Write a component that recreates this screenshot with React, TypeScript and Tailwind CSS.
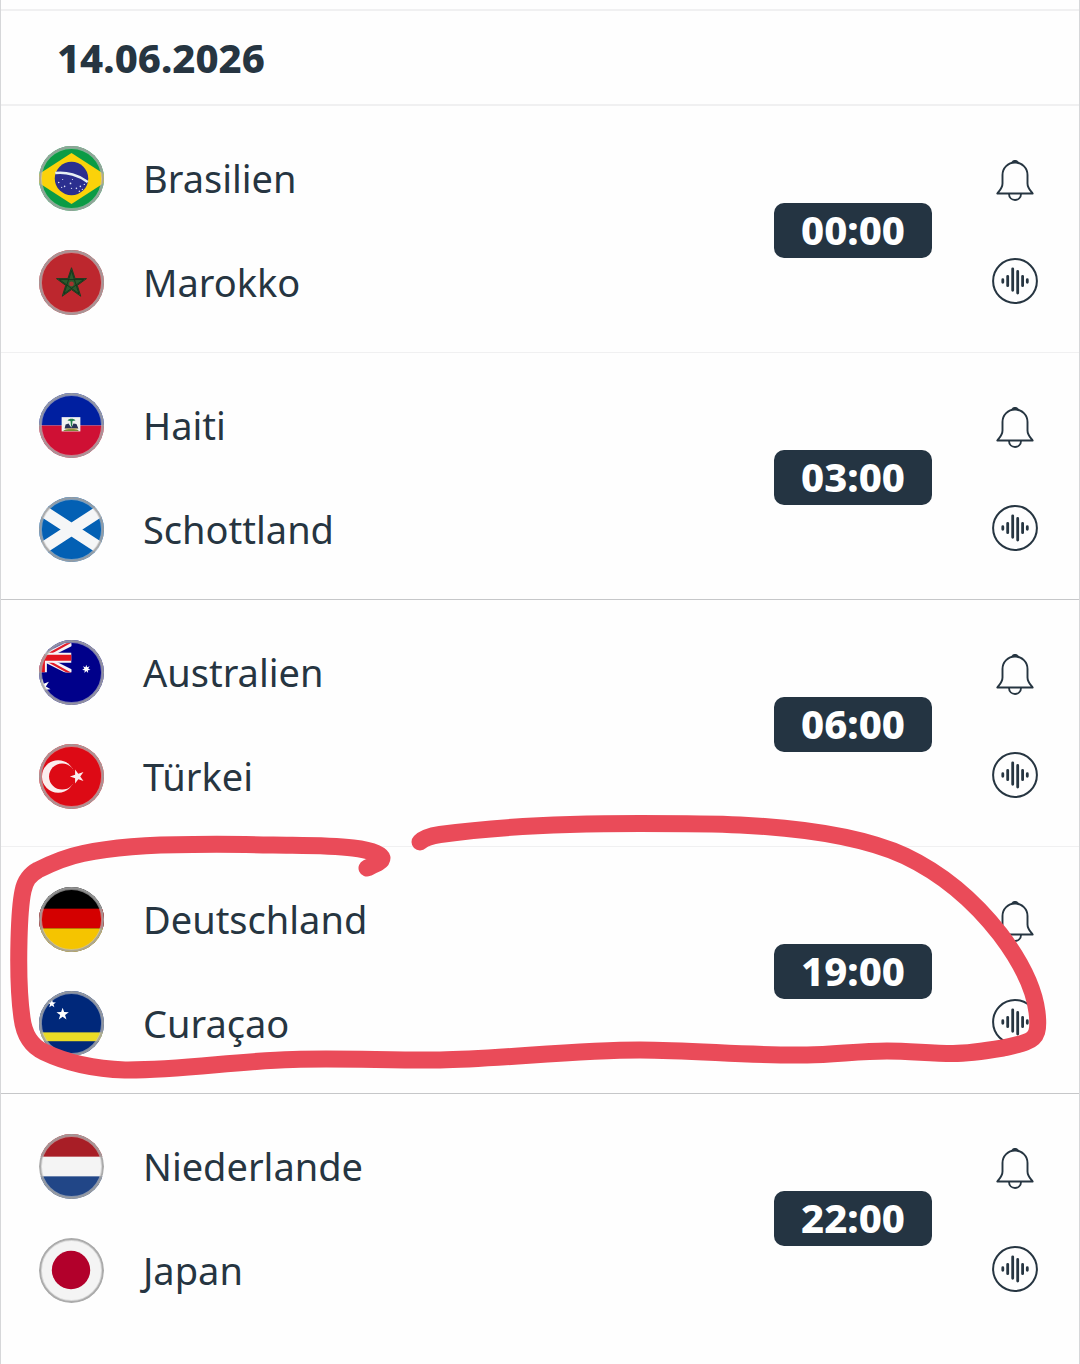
import React from 'react';

interface Team {
  name: string;
  flag: React.ReactNode;
}

interface Match {
  time: string;
  home: Team;
  away: Team;
  marked?: boolean;
}

// Points string of a regular star, first tip at `turn` degrees
const star = (cx: number, cy: number, outer: number, inner: number, tips = 5, turn = -90) => {
  const points: string[] = [];
  for (let i = 0; i < tips * 2; i++) {
    const r = i % 2 === 0 ? outer : inner;
    const a = ((turn + (i * 180) / tips) * Math.PI) / 180;
    points.push(`${(cx + r * Math.cos(a)).toFixed(2)},${(cy + r * Math.sin(a)).toFixed(2)}`);
  }
  return points.join(' ');
};

const brazil = (
  <>
    <rect width="66" height="66" fill="#0b9b45" />
    <path d="M33 7L73 33L33 59L-7 33Z" fill="#fbd20a" />
    <circle cx="33" cy="33" r="17" fill="#2b2f8f" />
    <path d="M16.5 27.5C28 26 41 30 49.5 36.5" fill="none" stroke="#e6f0f4" strokeWidth="2.6" />
    <g fill="#dfe3f5">
      <circle cx="20" cy="37" r="0.8" />
      <circle cx="24" cy="34" r="0.6" />
      <circle cx="26" cy="41" r="0.8" />
      <circle cx="23" cy="42" r="0.7" />
      <circle cx="32" cy="38" r="0.9" />
      <circle cx="34" cy="34" r="0.6" />
      <circle cx="33" cy="43" r="0.7" />
      <circle cx="38" cy="43" r="0.8" />
      <circle cx="41" cy="46" r="0.8" />
      <circle cx="42" cy="41" r="0.8" />
      <circle cx="44" cy="44" r="0.7" />
      <circle cx="46" cy="39" r="0.7" />
    </g>
  </>
);

const morocco = (
  <>
    <rect width="66" height="66" fill="#bd272e" />
    <polygon points={star(33, 34, 16, 6.2)} fill="#2c5a2d" stroke="#1f3a20" strokeWidth="1" />
    <path
      d="M33 21L40.6 44.5L20.6 30H45.4L25.4 44.5Z"
      fill="none"
      stroke="#16331b"
      strokeWidth="0.9"
    />
    <circle cx="33" cy="34.5" r="2.4" fill="#a5342f" />
  </>
);

const haiti = (
  <>
    <rect width="66" height="33" fill="#001fa0" />
    <rect y="33" width="66" height="33" fill="#cf1034" />
    <rect x="23" y="24.5" width="19" height="14.5" fill="#f1f2f1" />
    <path d="M24.5 38.5C27 36 39 36 40.5 38.5Z" fill="#7a8a3a" />
    <path d="M26 36L27 32L30 31L32 34L33 35L35 31L38 31.5L40 36Z" fill="#2a3357" />
    <path d="M29 28C30 25.5 36 25.5 37 28L34 28.5L33.5 34H32.5L32 28.5Z" fill="#1f7d4a" />
    <path d="M27 36.5H39" stroke="#c4a33b" strokeWidth="0.9" />
  </>
);

const scotland = (
  <>
    <rect width="66" height="66" fill="#0360b4" />
    <path d="M-17 0.5L83 65.5M-17 65.5L83 0.5" stroke="#f5f6f7" strokeWidth="12" />
  </>
);

const australia = (
  <>
    <rect width="66" height="66" fill="#00008a" />
    <svg x="-27" y="3" width="60" height="30" viewBox="0 0 60 30">
      <path d="M0 0L60 30M60 0L0 30" stroke="#f6f3f6" strokeWidth="6" />
      <path d="M30 15L60 31.5M30 15L60 -1.5" stroke="#e01c2a" strokeWidth="2.2" />
      <path d="M30 0V30M0 15H60" stroke="#f6f3f6" strokeWidth="10" />
      <path d="M30 0V30M0 15H60" stroke="#e3141f" strokeWidth="6" />
    </svg>
    <polygon points={star(48, 29.5, 4.4, 2, 7)} fill="#fff" />
    <polygon points={star(3, 48, 9, 4, 7)} fill="#fff" />
  </>
);

const turkey = (
  <>
    <rect width="66" height="66" fill="#dd0a15" />
    <circle cx="19.5" cy="33" r="16.5" fill="#fbeeee" />
    <circle cx="23.5" cy="33" r="13.3" fill="#dd0a15" />
    <polygon points={star(39, 33, 7.6, 2.9, 5, 180)} fill="#fbeeee" />
  </>
);

const germany = (
  <>
    <rect width="66" height="66" fill="#000" />
    <rect y="22" width="66" height="20" fill="#d40000" />
    <rect y="42" width="66" height="24" fill="#f5c400" />
  </>
);

const curacao = (
  <>
    <rect width="66" height="66" fill="#00287a" />
    <rect y="42" width="66" height="9" fill="#eadc26" />
    <polygon points={star(24, 23.5, 6.6, 2.6)} fill="#fff" />
    <polygon points={star(13, 13, 4.4, 1.8)} fill="#fff" />
  </>
);

const netherlands = (
  <>
    <rect width="66" height="66" fill="#f4f4f4" />
    <rect width="66" height="23" fill="#a81e26" />
    <rect y="43" width="66" height="23" fill="#214687" />
  </>
);

const japan = (
  <>
    <rect width="66" height="66" fill="#f4f4f4" />
    <circle cx="32.5" cy="32.5" r="19.5" fill="#b2002b" />
  </>
);

const matches: Match[] = [
  { time: '00:00', home: { name: 'Brasilien', flag: brazil }, away: { name: 'Marokko', flag: morocco } },
  { time: '03:00', home: { name: 'Haiti', flag: haiti }, away: { name: 'Schottland', flag: scotland } },
  { time: '06:00', home: { name: 'Australien', flag: australia }, away: { name: 'Türkei', flag: turkey } },
  { time: '19:00', home: { name: 'Deutschland', flag: germany }, away: { name: 'Curaçao', flag: curacao }, marked: true },
  { time: '22:00', home: { name: 'Niederlande', flag: netherlands }, away: { name: 'Japan', flag: japan } },
];

const BellIcon: React.FC = () => (
  <svg viewBox="0 0 46 46" className="w-full h-full" fill="none" stroke="currentColor" strokeWidth="1.9" strokeLinejoin="round">
    <path d="M23 4.5C16 4.5 10.5 10 10.5 17V25.5C10.5 30 8 32 5.3 35.5H40.7C38 32 35.5 30 35.5 25.5V17C35.5 10 30 4.5 23 4.500Z" />
    <path d="M17 35.8C17 44 29 44 29 35.8" />
    <path d="M19.5 4.5C20.5 1.8 25.5 1.8 26.5 4.5Z" fill="currentColor" strokeWidth="1" />
  </svg>
);

const AudioIcon: React.FC = () => (
  <svg viewBox="0 0 46 46" className="w-full h-full" fill="none" stroke="currentColor" strokeLinecap="round">
    <circle cx="23" cy="23" r="21.9" strokeWidth="2" />
    <path
      d="M10.8 21.7V24.3M15.7 18.3V27.7M20.7 10.8V32.3M25.7 13.5V35M30.6 18.3V27.7M35.3 21.7V24.3"
      strokeWidth="2.8"
    />
  </svg>
);

const TeamLine: React.FC<{ team: Team }> = ({ team }) => (
  <div className="flex items-center gap-[39px] h-[65px]">
    <span className="w-[65px] h-[65px] shrink-0 rounded-full overflow-hidden">
      <svg viewBox="0 0 66 66" className="w-full h-full" aria-hidden="true">
        {team.flag}
        <circle cx="33" cy="33" r="31.5" fill="none" stroke="#c4c4c4" strokeOpacity="0.6" strokeWidth="3" />
        <circle cx="33" cy="33" r="32" fill="none" stroke="#9c9c9c" strokeOpacity="0.75" strokeWidth="2" />
      </svg>
    </span>
    <span className="pb-0.5 text-[38px] leading-[48px]">{team.name}</span>
  </div>
);

// Hand-drawn marker loop around a match
const Marker: React.FC = () => (
  <svg
    viewBox="1 807 1078 300"
    preserveAspectRatio="none"
    className="absolute left-0 -top-10 w-full h-[300px] pointer-events-none z-10"
    fill="none"
    stroke="#ea4b59"
    strokeWidth="17"
    strokeLinecap="round"
    strokeLinejoin="round"
    aria-hidden="true"
  >
    <path
      d="M420 842C424 838 430 836 440 834.5C500 826 570 823.5 640 823.5C680 823.5 710 823.5 740 825
         C820 829 870 840 905 856C945 875 975 902 1000 934C1022 963 1034 988 1037 1012
         C1039 1029 1038 1038 1026 1042C1019 1045 1011 1046 1003 1048C985 1051 970 1053.5 953 1053.5
         C930 1053.5 910 1051 887 1051C860 1051 835 1054.5 807 1055C750 1056 695 1050 640 1050
         C575 1050 500 1059 440 1060C390 1060.5 340 1058 293 1059.5C235 1061 180 1070.5 125 1070
         C95 1069 67 1063 44 1052C31 1046 24 1034 22 1018C18 990 18.5 960 19 940C19.5 920 20 905 23 891
         C25 881 29 875 38 870C50 864 66 857 83 853.5C118 846 158 844.5 193 844.5C220 844 250 844.5 273 845
         C305 845.5 330 845 353 848C370 850 381 854 382 858C382 862 375 864.5 367 868"
    />
  </svg>
);

const MatchRow: React.FC<{ match: Match }> = ({ match }) => (
  <li className="relative flex items-center pt-10 pb-[37px] pl-[38px] pr-[41px] border-b border-[#f0f0f1] even:border-[#c6c7c9] last:border-transparent">
    <div className="flex-1 min-w-0 flex flex-col gap-[39px]">
      <TeamLine team={match.home} />
      <TeamLine team={match.away} />
    </div>

    <time className="w-[158px] h-[55px] pb-0.5 flex items-center justify-center rounded-[10px] bg-[#243442] text-white text-[40px] leading-[48px] font-extrabold">
      {match.time}
    </time>

    <div className="ml-[60px] flex flex-col gap-[54px]">
      <button type="button" aria-label="Benachrichtigung" className="block w-[46px] h-[46px]">
        <BellIcon />
      </button>
      <button type="button" aria-label="Audio" className="block w-[46px] h-[46px]">
        <AudioIcon />
      </button>
    </div>

    {match.marked && <Marker />}
  </li>
);

export default function App() {
  return (
    <main className="min-h-screen border-x border-[#d6d7d9] bg-[#fefefe] text-[#263541] font-['Noto_Sans',sans-serif]">
      <header className="pt-[9px]">
        <h1 className="flex items-center h-[97px] pl-14 border-t-2 border-b-2 border-[#f0f0f1] text-[40px] leading-[48px] font-extrabold">
          14.06.2026
        </h1>
      </header>
      <ul>
        {matches.map((match) => (
          <MatchRow key={match.time} match={match} />
        ))}
      </ul>
    </main>
  );
}
